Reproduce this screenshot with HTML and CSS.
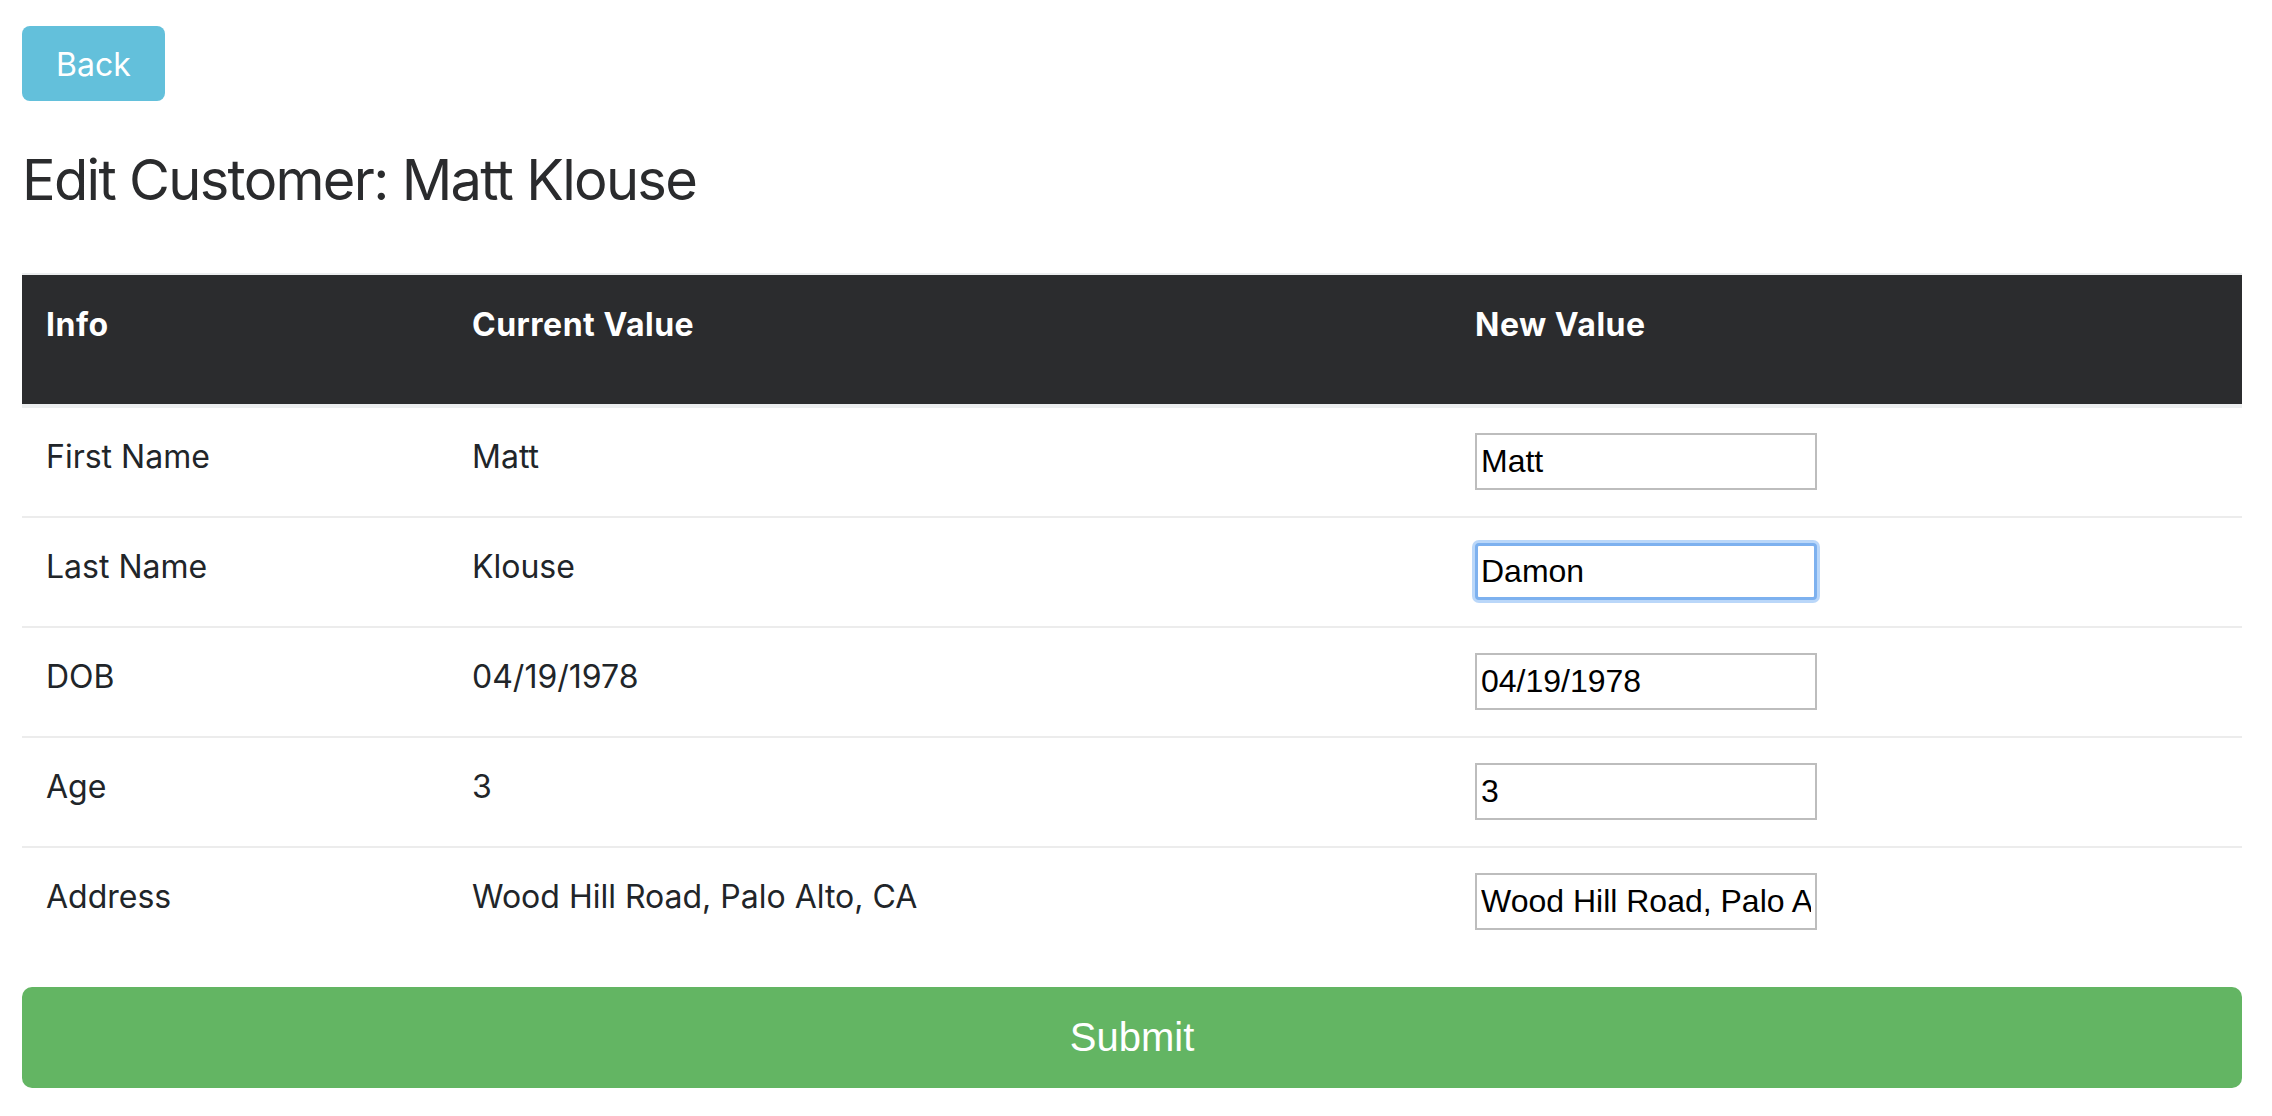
FILE: index.html
```html
<!DOCTYPE html>
<html lang="en">
<head>
<meta charset="utf-8">
<title>Edit Customer</title>
<link rel="stylesheet" href="styles.css">
</head>
<body>
<div class="page">
  <button class="btn btn-back" type="button">Back</button>
  <h3 class="title">Edit Customer: Matt Klouse</h3>
  <table class="edit-table">
    <colgroup>
      <col class="col-info">
      <col class="col-current">
      <col class="col-new">
    </colgroup>
    <thead>
      <tr>
        <th>Info</th>
        <th>Current Value</th>
        <th>New Value</th>
      </tr>
    </thead>
    <tbody>
      <tr>
        <td>First Name</td>
        <td>Matt</td>
        <td><input class="field" type="text" value="Matt"></td>
      </tr>
      <tr>
        <td>Last Name</td>
        <td>Klouse</td>
        <td><input class="field field-focus" type="text" value="Damon"></td>
      </tr>
      <tr>
        <td>DOB</td>
        <td>04/19/1978</td>
        <td><input class="field" type="text" value="04/19/1978"></td>
      </tr>
      <tr>
        <td>Age</td>
        <td>3</td>
        <td><input class="field" type="text" value="3"></td>
      </tr>
      <tr>
        <td>Address</td>
        <td>Wood Hill Road, Palo Alto, CA</td>
        <td><input class="field" type="text" value="Wood Hill Road, Palo Alto, CA"></td>
      </tr>
    </tbody>
  </table>
  <button class="btn btn-submit" type="button">Submit</button>
</div>
</body>
</html>
```

FILE: styles.css
```css
html, body {
  margin: 0;
  padding: 0;
  background: #ffffff;
}

body {
  font-family: "Inter", "Liberation Sans", sans-serif;
  font-size: 32px;
  line-height: 48px;
  color: #212529;
}

.page {
  padding: 26px 30px 0 22px;
}

.btn {
  display: block;
  border: 0;
  cursor: pointer;
  color: #ffffff;
}

.btn-back {
  background: #63c0db;
  font-family: "Inter", "Liberation Sans", sans-serif;
  font-size: 32px;
  line-height: 48px;
  padding: 15px 34px 12px;
  border-radius: 8px;
}

.title {
  margin: 46px 0 0;
  font-size: 56px;
  line-height: 67px;
  font-weight: 400;
  letter-spacing: -1.7px;
  color: #2a2b2d;
}

.edit-table {
  width: 100%;
  margin-top: 59px;
  border-collapse: collapse;
  table-layout: fixed;
  border-top: 2px solid #eceeef;
}

.col-info { width: 426px; }
.col-current { width: 1003px; }
.col-new { width: auto; }

.edit-table th {
  background: #2b2c2e;
  color: #ffffff;
  font-weight: 700;
  letter-spacing: 0.5px;
  text-align: left;
  padding: 26px 24px 55px;
  border-bottom: 4px solid #eceeef;
}

.edit-table td {
  padding: 25px 24px 26px;
  vertical-align: top;
  border-top: 2px solid #ececec;
}

.edit-table tbody tr:first-child td {
  border-top: 0;
}

.field {
  display: block;
  box-sizing: border-box;
  width: 342px;
  height: 57px;
  margin: 0;
  padding: 0 4px;
  border: 2px solid #bdbdbd;
  border-radius: 0;
  font-family: "Liberation Sans", Arial, sans-serif;
  font-size: 32px;
  color: #000000;
  background: #ffffff;
  outline: none;
}

.field-focus {
  border: 3px solid #7db1ef;
  padding: 0 3px;
  border-radius: 4px;
  box-shadow: 0 0 0 3px rgba(140, 188, 245, 0.6);
}

.btn-submit {
  width: 100%;
  margin-top: 31px;
  height: 101px;
  background: #63b563;
  border-radius: 10px;
  font-family: "Liberation Sans", Arial, sans-serif;
  font-size: 40px;
}
```
